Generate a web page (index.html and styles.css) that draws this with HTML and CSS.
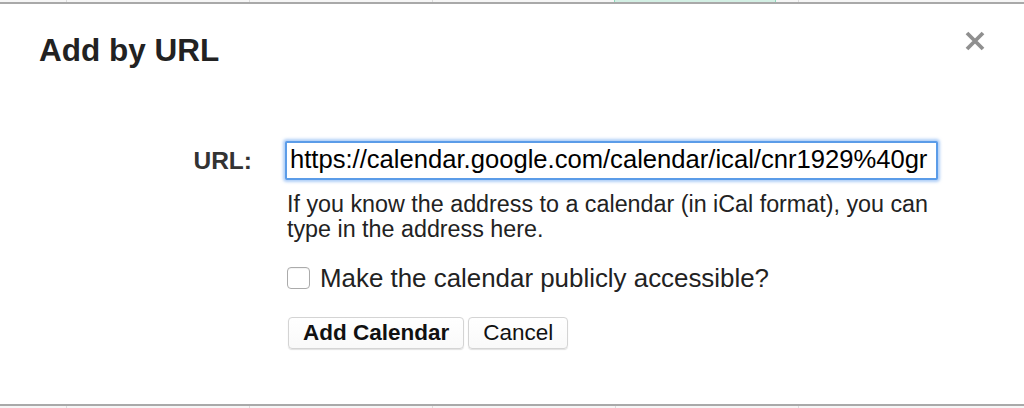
FILE: index.html
```html
<!DOCTYPE html>
<html>
<head>
<meta charset="utf-8">
<link rel="stylesheet" href="styles.css">
</head>
<body>
<div class="page">
  <div class="grid">
    <div class="cell first"></div>
    <div class="cell"></div>
    <div class="cell"></div>
    <div class="cell"></div>
    <div class="cell"><div class="event"></div></div>
    <div class="cell last"></div>
  </div>
  <div class="dialog">
    <h1 class="title">Add by URL</h1>
    <button class="close" aria-label="Close">
      <svg width="20" height="20" viewBox="0 0 20 20"><path d="M2 2 L18 18 M18 2 L2 18" stroke="#8f8f8f" stroke-width="3.8" stroke-linecap="butt"/></svg>
    </button>
    <div class="form">
      <label class="label" for="url">URL:</label>
      <div class="field">
        <div class="urlbox">
          <input id="url" class="url" type="text" value="https://calendar.google.com/calendar/ical/cnr1929%40group.calendar.google.com/public/basic.ics">
        </div>
        <p class="help">If you know the address to a calendar (in iCal format), you can type in the address here.</p>
        <label class="check"><input type="checkbox" class="cb"><span>Make the calendar publicly accessible?</span></label>
        <div class="actions">
          <button class="btn primary">Add Calendar</button>
          <button class="btn">Cancel</button>
        </div>
      </div>
    </div>
  </div>
</div>
</body>
</html>
```
FILE: styles.css
```css
* { box-sizing: border-box; }
html, body { margin: 0; padding: 0; }
body {
  font-family: "Liberation Sans", Arial, Helvetica, sans-serif;
  color: #222;
  background: #f4f4f4;
}
.page {
  position: relative;
  width: 1024px;
  height: 408px;
  overflow: hidden;
}
.grid {
  display: flex;
  height: 100%;
  background: #f6f6f6;
}
.cell {
  width: 183px;
  flex: none;
  border-right: 1px solid #dcdcdc;
  position: relative;
}
.cell.first { width: 67px; }
.cell.last { flex: 1; border-right: none; }
.event {
  position: absolute;
  left: -2px;
  top: 0;
  width: 162px;
  height: 8px;
  background: #d3efe4;
  border-left: 1px solid #8fd8bd;
  border-right: 1px solid #8fd8bd;
}
.dialog {
  position: absolute;
  left: -2px;
  right: -2px;
  top: 2px;
  bottom: 2px;
  background: #fff;
  border: 2px solid #a9a9a9;
}
.title {
  margin: 0;
  padding: 28px 0 0 39px;
  font-size: 31.5px;
  line-height: 36px;
  font-weight: bold;
  color: #222;
}
.close {
  position: absolute;
  top: 27px;
  right: 39px;
  width: 20px;
  height: 20px;
  padding: 0;
  border: 0;
  background: none;
  display: flex;
}
.form {
  display: grid;
  grid-template-columns: 252px 1fr;
  column-gap: 33px;
  margin-top: 73px;
}
.label {
  text-align: right;
  font-weight: bold;
  font-size: 24.5px;
  line-height: 39px;
  color: #333;
}
.field {
  display: flex;
  flex-direction: column;
  align-items: flex-start;
}
.urlbox {
  width: 653px;
  height: 39px;
  border: 2px solid #5b9ce8;
  border-radius: 2px;
  box-shadow: 0 0 3px 2px rgba(110, 165, 240, 0.55);
  background: #fff;
  display: flex;
}
.url {
  flex: none;
  width: 641px;
  height: 35px;
  margin: 0;
  padding: 0 0 3px 3px;
  font-family: "Liberation Sans", Arial, sans-serif;
  font-size: 25.6px;
  color: #000;
  border: 0;
  outline: none;
  background: transparent;
}
.help {
  margin: 12px 0 0 2px;
  width: 660px;
  font-size: 23.3px;
  line-height: 25px;
  color: #222;
}
.check {
  display: flex;
  align-items: center;
  margin: 22px 0 0 2px;
  font-size: 25.9px;
  line-height: 28px;
  color: #222;
}
.cb {
  appearance: none;
  -webkit-appearance: none;
  width: 23px;
  height: 22px;
  margin: 0 10px 0 0;
  border: 1px solid #ababab;
  border-radius: 4px;
  background: #fff;
  box-shadow: inset 0 1px 1px rgba(0,0,0,0.05);
}
.actions {
  display: flex;
  gap: 4px;
  margin: 25px 0 0 3px;
}
.btn {
  height: 32px;
  padding: 0 14px;
  font-family: "Liberation Sans", Arial, sans-serif;
  font-size: 22.5px;
  line-height: 30px;
  color: #111;
  background: linear-gradient(#fff, #f9f9f9);
  border: 1px solid #d4d4d4;
  border-radius: 4px;
  box-shadow: 0 1px 1px rgba(0,0,0,0.12);
}
.btn.primary { font-weight: bold; }
```
